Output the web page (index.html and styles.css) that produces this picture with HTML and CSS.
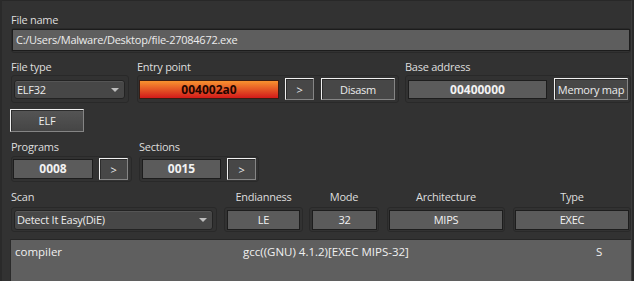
FILE: index.html
```html
<!DOCTYPE html>
<html lang="en">
<head>
  <meta charset="UTF-8" />
  <title>Detect It Easy - file info</title>
  <link rel="stylesheet" href="styles.css">
</head>
<body>

  <div class="window">
    <div class="label">File name</div>
    <div class="frame frame-name">
      <div class="input">C:/Users/Malware/Desktop/file-27084672.exe</div>
    </div>

    <div class="row row-info">
      <div class="col col-type">
        <div class="label">File type</div>
        <div class="frame">
          <div class="combo combo-type">ELF32<span class="arrow"></span></div>
        </div>
      </div>
      <div class="col col-entry">
        <div class="label">Entry point</div>
        <div class="frame">
          <div class="box entry">004002a0</div>
          <button class="btn btn-more">&gt;</button>
          <button class="btn btn-wide">Disasm</button>
        </div>
      </div>
      <div class="col col-base">
        <div class="label">Base address</div>
        <div class="frame">
          <div class="box value">00400000</div>
          <button class="btn btn-wide">Memory map</button>
        </div>
      </div>
    </div>

    <button class="btn btn-elf">ELF</button>

    <div class="row row-tables">
      <div class="col col-programs">
        <div class="label">Programs</div>
        <div class="frame">
          <div class="box value">0008</div>
          <button class="btn btn-more">&gt;</button>
        </div>
      </div>
      <div class="col col-sections">
        <div class="label">Sections</div>
        <div class="frame">
          <div class="box value">0015</div>
          <button class="btn btn-more">&gt;</button>
        </div>
      </div>
    </div>

    <div class="row row-scan">
      <div class="col col-scan">
        <div class="label">Scan</div>
        <div class="frame">
          <div class="combo combo-scan">Detect It Easy(DiE)<span class="arrow"></span></div>
        </div>
      </div>
      <div class="col col-endian">
        <div class="label center">Endianness</div>
        <div class="frame"><div class="box plain">LE</div></div>
      </div>
      <div class="col col-mode">
        <div class="label center">Mode</div>
        <div class="frame"><div class="box plain">32</div></div>
      </div>
      <div class="col col-arch">
        <div class="label center">Architecture</div>
        <div class="frame"><div class="box plain">MIPS</div></div>
      </div>
      <div class="col col-kind">
        <div class="label center">Type</div>
        <div class="frame"><div class="box plain">EXEC</div></div>
      </div>
    </div>

    <div class="results">
      <span>compiler</span>
      <span>gcc((GNU) 4.1.2)[EXEC MIPS-32]</span>
      <span>S</span>
    </div>
  </div>

</body>
</html>
```

FILE: styles.css
```css
* {
  box-sizing: border-box;
}

html, body {
  margin: 0;
  padding: 0;
  height: 100%;
}

body {
  background: #2a2a2a;
  font-family: "Open Sans", sans-serif;
  font-size: 11px;
  letter-spacing: -0.25px;
  color: #dedede;
  overflow: hidden;
}

.window {
  background: #323232;
  margin-left: 2px;
  width: 630px;
  height: 281px;
  border-top: 1px solid #282828;
  border-right: 1px solid #3b3b3b;
  padding: 11px 0 0 9px;
  overflow: hidden;
}

.label {
  line-height: 15px;
  margin-bottom: 1px;
  white-space: nowrap;
}

.label.center {
  text-align: center;
}

.frame {
  display: flex;
  align-items: center;
  border: 1px solid #292929;
  border-radius: 3px;
  padding: 1px;
}

.frame-name {
  width: 620px;
  padding: 0 0 1px 0;
}

.input {
  width: 100%;
  height: 22px;
  line-height: 20px;
  padding-left: 3px;
  background: #5e5e5e;
  border: 1px solid #1c1c1c;
  color: #ececec;
}

.row {
  display: flex;
}

.col {
  flex: none;
}

/* first row: type / entry / base */
.row-info {
  margin-top: 6px;
}

.row-info .frame {
  height: 28px;
}

.col-type {
  width: 118px;
  margin-right: 8px;
}

.col-type .frame {
  padding-left: 2px;
}

.col-entry {
  width: 262px;
  margin-right: 6px;
}

.col-base {
  width: 226px;
}

.col-base .frame {
  padding-left: 2px;
}

.combo {
  position: relative;
  height: 19px;
  line-height: 17px;
  padding-left: 2px;
  background: #474747;
  border: 1px solid #232323;
  border-radius: 3px;
  box-shadow: inset 0 1px #555555;
  color: #ececec;
}

.combo-type {
  width: 111px;
}

.combo-scan {
  width: 199px;
  height: 20px;
  line-height: 18px;
}

.arrow {
  position: absolute;
  right: 5px;
  top: 7px;
  border-left: 4px solid transparent;
  border-right: 4px solid transparent;
  border-top: 4px solid #bdbdbd;
}

.box {
  height: 19px;
  line-height: 17px;
  text-align: center;
  background: #5b5b5b;
  border: 1px solid #1d1d1d;
  color: #f2f2f2;
}

.box.value {
  font-weight: bold;
  font-size: 12px;
  letter-spacing: 0;
}

.box.entry {
  width: 140px;
  font-weight: bold;
  font-size: 12px;
  letter-spacing: 0;
  color: #240500;
  border-color: #3a1c12;
  background: linear-gradient(#f8922f, #d31a1a);
}

.col-base .box.value {
  width: 139px;
}

.btn {
  height: 22px;
  padding: 0;
  font-family: "Open Sans", sans-serif;
  font-size: 11px;
  letter-spacing: -0.25px;
  color: #ececec;
  background: #474747;
  border: 1px solid;
  border-color: #f0f0f0 #858585 #858585 #f0f0f0;
  box-shadow: inset 1px 1px #2c2c2c;
  white-space: nowrap;
}

.btn-more {
  width: 29px;
  margin-left: 6px;
}

.btn-wide {
  width: 74px;
  margin-left: 7px;
}

.btn-elf {
  display: block;
  width: 74px;
  height: 23px;
  margin: 6px 0 0 -1px;
  background: linear-gradient(#555555, #454545);
}

/* second row: programs / sections */
.row-tables {
  margin-top: 7px;
}

.row-tables .label {
  margin-bottom: 2px;
}

.row-tables .frame {
  height: 26px;
}

.col-programs {
  width: 121px;
  margin-right: 7px;
}

.col-programs .box {
  width: 80px;
  height: 20px;
}

.col-sections {
  width: 120px;
}

.col-sections .frame {
  padding-left: 2px;
}

.col-sections .box {
  width: 79px;
  height: 20px;
}

/* third row: scan and its summary */
.row-scan {
  margin-top: 7px;
}

.row-scan .label {
  margin-bottom: 3px;
}

.row-scan .frame {
  height: 25px;
}

.row-scan .box {
  height: 20px;
  line-height: 18px;
}

.col-scan {
  width: 206px;
  margin-right: 7px;
}

.col-scan .frame {
  padding-left: 2px;
}

.col-endian {
  width: 79px;
  margin-right: 6px;
}

.col-endian .frame {
  padding-left: 2px;
}

.col-endian .box {
  width: 73px;
}

.col-mode {
  width: 70px;
  margin-right: 8px;
}

.col-mode .frame {
  padding-left: 2px;
}

.col-mode .box {
  width: 65px;
}

.col-arch {
  width: 118px;
  margin-right: 8px;
}

.col-arch .box {
  width: 114px;
}

.col-kind {
  width: 118px;
}

.col-kind .box {
  width: 114px;
}

.results {
  display: grid;
  grid-template-columns: 228px 353px auto;
  margin: 7px 0 0 -1px;
  width: 622px;
  height: 60px;
  padding: 4px 0 0 4px;
  background: #5f5f5f;
  border-top: 1px solid #262626;
  border-left: 1px solid #2a2a2a;
  font-size: 11.5px;
  letter-spacing: 0;
  line-height: 16px;
  color: #f0f0f0;
}
```
